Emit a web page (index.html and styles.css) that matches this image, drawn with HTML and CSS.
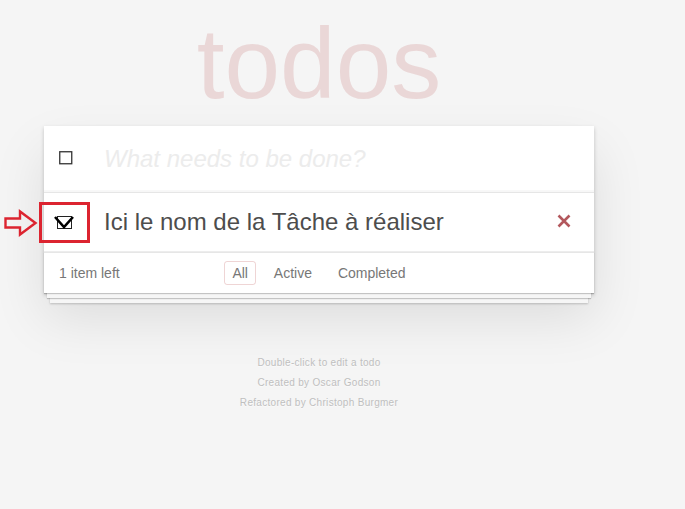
FILE: index.html
```html
<!DOCTYPE html>
<html lang="fr">
<head>
<meta charset="utf-8">
<title>todos</title>
<link rel="stylesheet" href="styles.css">
</head>
<body>
<div class="page">
  <h1 class="title">todos</h1>
  <section class="todoapp">
    <header class="header">
      <span class="toggle-all">
        <svg width="14" height="14" viewBox="0 0 14 14"><rect x="0.75" y="0.75" width="12" height="12" fill="#fff" stroke="#333" stroke-width="1.3"/></svg>
      </span>
      <input class="new-todo" type="text" placeholder="What needs to be done?">
    </header>
    <ul class="todo-list">
      <li class="todo">
        <span class="toggle">
          <svg width="20" height="16" viewBox="0 0 20 16"><rect x="3.5" y="2.5" width="14" height="12" fill="#fff" stroke="#222" stroke-width="1"/><polyline points="1,3 10,13 19,3" fill="none" stroke="#000" stroke-width="2.6"/></svg>
        </span>
        <label class="todo-label">Ici le nom de la Tâche à réaliser</label>
        <span class="destroy">
          <svg width="14" height="14" viewBox="0 0 14 14"><path d="M1.5 1.5 L12.5 12.5 M12.5 1.5 L1.5 12.5" stroke="#b3585d" stroke-width="2.6" fill="none"/></svg>
        </span>
        <span class="highlight"></span>
        <svg class="arrow" width="34" height="28" viewBox="0 0 34 28"><path d="M1.5 9.5 H16 V2.5 L31.5 14 L16 25.5 V18.5 H1.5 Z" fill="none" stroke="#dc2430" stroke-width="2.4"/></svg>
      </li>
    </ul>
    <footer class="footer">
      <span class="todo-count">1 item left</span>
      <ul class="filters">
        <li><a class="filter selected">All</a></li>
        <li><a class="filter">Active</a></li>
        <li><a class="filter">Completed</a></li>
      </ul>
      <span></span>
    </footer>
  </section>
  <footer class="info">
    <p>Double-click to edit a todo</p>
    <p>Created by Oscar Godson</p>
    <p>Refactored by Christoph Burgmer</p>
  </footer>
</div>
</body>
</html>
```
FILE: styles.css
```css
html, body {
  margin: 0;
  padding: 0;
}
body {
  background: #f5f5f5;
  color: #4d4d4d;
  font-family: "Liberation Sans", Arial, sans-serif;
  font-size: 14px;
  line-height: 1.4em;
}
.page {
  width: 550px;
  margin-left: 44px;
  padding-top: 13px;
}
.title {
  margin: 0 0 13px 0;
  font-size: 100px;
  line-height: 100px;
  font-weight: normal;
  text-align: center;
  color: rgba(175, 47, 47, 0.15);
}
.todoapp {
  background: #fff;
  box-shadow: 0 2px 4px 0 rgba(0, 0, 0, 0.2), 0 25px 50px 0 rgba(0, 0, 0, 0.1);
}
.header {
  display: flex;
  align-items: center;
  box-shadow: inset 0 -2px 1px rgba(0, 0, 0, 0.03);
}
.toggle-all {
  width: 45px;
  padding-left: 15px;
  display: flex;
  align-items: center;
  margin-top: -2px;
}
.toggle-all svg { display: block; }
.new-todo {
  flex: 1;
  min-width: 0;
  border: 0;
  outline: none;
  background: transparent;
  padding: 16px 16px 16px 0;
  margin: 0;
  height: 33.6px;
  font-family: inherit;
  font-size: 24px;
  line-height: 1.4em;
  color: #4d4d4d;
}
.new-todo::placeholder {
  font-style: italic;
  color: #ececec;
}
.todo-list {
  margin: 0;
  padding: 0;
  list-style: none;
  border-top: 1px solid #e6e6e6;
}
.todo {
  position: relative;
  display: flex;
  align-items: center;
  border-bottom: 1px solid #ededed;
  font-size: 24px;
}
.toggle {
  width: 35px;
  padding-left: 10px;
  display: flex;
  align-items: center;
}
.toggle svg { display: block; }
.todo-label {
  flex: 1;
  padding: 15px 15px 15px 15px;
  line-height: 1.2;
  color: #4d4d4d;
}
.destroy {
  margin-right: 23px;
  display: flex;
  margin-top: -2px;
}
.destroy svg { display: block; }
.highlight {
  position: absolute;
  left: -5px;
  top: 9px;
  width: 51px;
  height: 41px;
  box-sizing: border-box;
  border: 3px solid #dc2430;
}
.arrow {
  position: absolute;
  left: -40px;
  top: 16px;
}
.footer {
  display: grid;
  grid-template-columns: 1fr auto 1fr;
  align-items: center;
  height: 20px;
  padding: 10px 15px;
  border-top: 1px solid #e6e6e6;
  color: #777;
  box-shadow: 0 1px 1px rgba(0, 0, 0, 0.2),
              0 8px 0 -3px #f6f6f6,
              0 9px 1px -3px rgba(0, 0, 0, 0.2),
              0 16px 0 -6px #f6f6f6,
              0 17px 2px -6px rgba(0, 0, 0, 0.2);
}
.todo-count {
  text-align: left;
}
.filters {
  margin: 0;
  padding: 0;
  list-style: none;
  white-space: nowrap;
}
.filters li {
  display: inline;
}
.filter {
  margin: 3px;
  padding: 3px 7px;
  border: 1px solid transparent;
  border-radius: 3px;
  color: inherit;
}
.filter.selected {
  border-color: rgba(175, 47, 47, 0.2);
}
.info {
  margin: 65px 0 0 0;
  color: #bfbfbf;
  font-size: 10px;
  letter-spacing: 0.3px;
  text-align: center;
  text-shadow: 0 1px 0 rgba(255, 255, 255, 0.5);
}
.info p {
  line-height: 1;
  margin: 10px 0;
}
```
